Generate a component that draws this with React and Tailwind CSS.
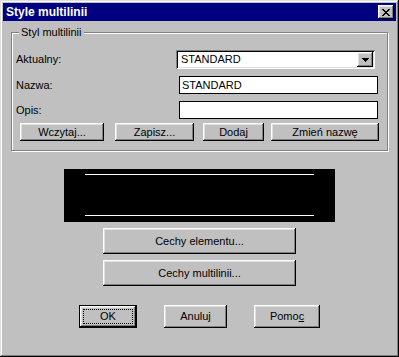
import React from "react";

const btn =
  "flex items-center justify-center bg-[#c0c0c0] text-black shadow-[inset_-1px_-1px_#000,inset_1px_1px_#fff,inset_-2px_-2px_#808080,inset_2px_2px_#dfdfdf]";

export default function App() {
  return (
    <div
      className="w-[399px] h-[357px] bg-[#c0c0c0] p-[3px] flex flex-col text-[11px] leading-none text-black shadow-[inset_-1px_-1px_#000,inset_1px_1px_#dfdfdf,inset_-2px_-2px_#808080,inset_2px_2px_#fff]"
      style={{ fontFamily: '"Liberation Sans", Arial, sans-serif' }}
    >
      {/* Title bar */}
      <div className="h-[18px] bg-[#000080] flex items-center justify-between pl-[3px] pr-[2px]">
        <span className="text-white font-bold text-[12px]">Style multilinii</span>
        <div className={"w-[16px] h-[14px] " + btn}>
          <svg width="8" height="7" viewBox="0 0 8 7" shapeRendering="crispEdges">
            <path d="M0 0h2v1h1v1h2V1h1V0h2v1H7v1H6v1H5v1h1v1h1v1h1v1H6V6H5V5H3v1H2v1H0V6h1V5h1V4h1V3H2V2H1V1H0z" fill="#000" />
          </svg>
        </div>
      </div>

      {/* Group box */}
      <div className="px-[8px]">
        <div className="relative mt-[11px] h-[119px] border border-[#808080] shadow-[1px_1px_0_#fff,inset_1px_1px_0_#fff] flex flex-col pl-[4px]">
          <span className="absolute left-[7px] top-[-6px] bg-[#c0c0c0] px-[2px]">Styl multilinii</span>

          <div className="mt-[17px] h-[19px] flex items-center">
            <span className="w-[160px]">Aktualny:</span>
            <div className="w-[199px] h-[19px] bg-white flex items-center justify-between pl-[5px] pr-[2px] shadow-[inset_1px_1px_#808080,inset_-1px_-1px_#fff,inset_2px_2px_#000,inset_-2px_-2px_#dfdfdf]">
              <span>STANDARD</span>
              <div className={"w-[16px] h-[15px] " + btn}>
                <svg width="7" height="4" viewBox="0 0 7 4" shapeRendering="crispEdges">
                  <path d="M0 0h7v1H6v1H5v1H4v1H3V3H2V2H1V1H0z" fill="#000" />
                </svg>
              </div>
            </div>
          </div>

          <div className="mt-[7px] h-[18px] flex items-center">
            <span className="w-[163px]">Nazwa:</span>
            <div className="w-[199px] h-[18px] bg-white border border-black flex items-center pl-[2px]">
              STANDARD
            </div>
          </div>

          <div className="mt-[7px] h-[18px] flex items-center">
            <span className="w-[163px]">Opis:</span>
            <div className="w-[199px] h-[18px] bg-white border border-black" />
          </div>

          <div className="mt-[4px] h-[18px] flex items-center pl-[4px]">
            <div className={"w-[84px] h-[18px] " + btn}>Wczytaj...</div>
            <div className={"ml-[11px] w-[79px] h-[18px] " + btn}>Zapisz...</div>
            <div className={"ml-[9px] w-[61px] h-[18px] " + btn}>Dodaj</div>
            <div className={"ml-[7px] w-[108px] h-[18px] " + btn}>Zmień nazwę</div>
          </div>
        </div>
      </div>

      {/* Preview */}
      <div className="mt-[18px] flex justify-center">
        <div className="w-[271px] h-[53px] bg-black px-[21px] pt-[5px] flex flex-col">
          <div className="h-[1px] bg-white" />
          <div className="h-[1px] bg-white mt-[40px]" />
        </div>
      </div>

      <div className="mt-[6px] flex flex-col items-center">
        <div className={"w-[193px] h-[26px] " + btn}>Cechy elementu...</div>
        <div className={"mt-[6px] w-[193px] h-[26px] " + btn}>Cechy multilinii...</div>
      </div>

      <div className="mt-[19px] flex items-center pl-[76px]">
        <div className="w-[58px] h-[23px] border border-black">
          <div className={"w-full h-full p-[3px] " + btn}>
            <div className="w-full h-full flex items-center justify-center border border-dotted border-black">OK</div>
          </div>
        </div>
        <div className={"ml-[27px] w-[63px] h-[23px] " + btn}>Anuluj</div>
        <div className={"ml-[27px] w-[66px] h-[23px] " + btn}>
          <span>
            Pomo<span className="underline">c</span>
          </span>
        </div>
      </div>
    </div>
  );
}
